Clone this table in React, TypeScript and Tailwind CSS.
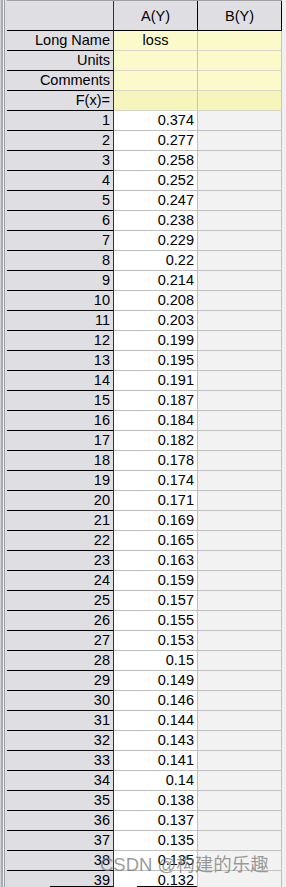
import React from "react";

const data: [number, string][] = [
  [1, "0.374"], [2, "0.277"], [3, "0.258"], [4, "0.252"], [5, "0.247"],
  [6, "0.238"], [7, "0.229"], [8, "0.22"], [9, "0.214"], [10, "0.208"],
  [11, "0.203"], [12, "0.199"], [13, "0.195"], [14, "0.191"], [15, "0.187"],
  [16, "0.184"], [17, "0.182"], [18, "0.178"], [19, "0.174"], [20, "0.171"],
  [21, "0.169"], [22, "0.165"], [23, "0.163"], [24, "0.159"], [25, "0.157"],
  [26, "0.155"], [27, "0.153"], [28, "0.15"], [29, "0.149"], [30, "0.146"],
  [31, "0.144"], [32, "0.143"], [33, "0.141"], [34, "0.14"], [35, "0.138"],
  [36, "0.137"], [37, "0.135"], [38, "0.135"], [39, "0.132"],
];

const labels = ["Long Name", "Units", "Comments", "F(x)="];

export default function App() {
  return (
    <div
      className="relative w-[286px] h-[887px] overflow-hidden flex bg-[#f0f0f0] text-black text-[14.5px]"
      style={{ fontFamily: '"Liberation Sans", Arial, sans-serif' }}
    >
      {/* left window edge strip */}
      <div className="flex h-full shrink-0">
        <div className="w-px bg-[#d4d4d4]" />
        <div className="w-[2px] bg-[#a3aac0]" />
        <div className="w-px bg-[#f0f0f0]" />
        <div className="w-px bg-[#a0a0a0]" />
        <div className="w-[2px] bg-[#dfdfe3]" />
      </div>

      {/* sheet */}
      <div className="flex flex-col w-[275px] shrink-0">
        {/* column header row */}
        <div className="flex h-[31px] shrink-0 border-t border-b border-t-[#a0a0a0] border-b-black bg-[#dfdfe3]">
          <div className="w-[107px] border-r border-r-[#333]" />
          <div className="w-[84px] border-r border-r-black flex items-center justify-center pt-[2px]">
            A(Y)
          </div>
          <div className="w-[84px] border-r border-r-black flex items-center justify-center pt-[2px]">
            B(Y)
          </div>
        </div>

        {/* label rows */}
        {labels.map((l, i) => {
          const yellow = i === 3 ? "bg-[#f6f6bc]" : "bg-[#fafaca]";
          return (
            <div key={l} className="flex h-[20px] shrink-0">
              <div className="w-[107px] bg-[#dfdfe3] border-r border-b border-r-[#333] border-b-black text-right pr-[3px] leading-[19px]">
                {l}
              </div>
              <div className={`w-[84px] ${yellow} border-r border-b border-r-[#c4c4c4] border-b-[#d6d6c8] text-center leading-[19px]`}>
                {i === 0 ? "loss" : ""}
              </div>
              <div className={`w-[84px] ${yellow} border-r border-b border-r-[#c4c4c4] border-b-[#d6d6c8]`} />
            </div>
          );
        })}

        {/* data rows */}
        {data.map(([n, v]) => (
          <div key={n} className="flex h-[20px] shrink-0">
            <div className="w-[107px] bg-[#dfdfe3] border-r border-b border-r-[#333] border-b-black text-right pr-[3px] leading-[19px]">
              {n}
            </div>
            <div className="w-[84px] bg-white border-r border-b border-r-[#c0c0c0] border-b-[#c0c0c0] text-right pr-[3px] leading-[19px]">
              {v}
            </div>
            <div className="w-[84px] bg-[#f2f2f2] border-r border-b border-r-[#c0c0c0] border-b-[#c0c0c0]" />
          </div>
        ))}
      </div>

      <div className="w-[4px] shrink-0 bg-[#f0f0f0]" />

      {/* bottom edge segments */}
      <div className="absolute bottom-0 left-[50px] w-[63px] h-px bg-black" />
      <div className="absolute bottom-0 left-[137px] w-[60px] h-px bg-black" />

      {/* watermark */}
      <div
        className="absolute left-[100px] top-[853px] text-[18.5px] leading-[24px] whitespace-nowrap text-[#7a7a7a]/75"
        style={{ fontFamily: '"Liberation Sans", "Noto Sans CJK SC", sans-serif' }}
      >
        CSDN @构建的乐趣
      </div>
    </div>
  );
}
